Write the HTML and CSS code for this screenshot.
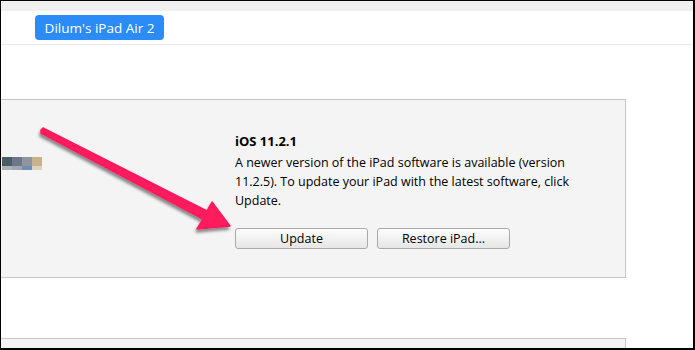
FILE: index.html
```html
<!DOCTYPE html>
<html lang="en">
<head>
    <meta charset="UTF-8">
    <title>iPad Summary</title>
    <link rel="stylesheet" href="styles.css">
</head>
<body>
    <div class="window">
        <div class="top-strip"></div>
        <div class="header">
            <span class="device-pill">Dilum's iPad Air 2</span>
        </div>

        <div class="panel">
            <div class="panel-left">
                <div class="thumb">
                    <span class="px" style="background:#4c5c65"></span>
                    <span class="px" style="background:#6e7789"></span>
                    <span class="px" style="background:#8c969b"></span>
                    <span class="px" style="background:#c8b18d"></span>
                    <span class="px low" style="background:#aeb1b2"></span>
                    <span class="px low" style="background:#a0a5b1"></span>
                    <span class="px low" style="background:#6d8fb6"></span>
                    <span class="px low" style="background:#ded2bd"></span>
                </div>
            </div>
            <div class="panel-right">
                <h3 class="version">iOS 11.2.1</h3>
                <p class="notice">A newer version of the iPad software is available (version 11.2.5). To update your iPad with the latest software, click Update.</p>
                <div class="actions">
                    <button class="btn">Update</button>
                    <button class="btn">Restore iPad...</button>
                </div>
            </div>
        </div>

        <div class="panel panel-next"></div>

        <svg class="arrow" width="695" height="350" viewBox="0 0 695 350">
            <defs>
                <filter id="shadow" x="-10%" y="-10%" width="130%" height="130%">
                    <feDropShadow dx="-1" dy="3" stdDeviation="1.6" flood-color="#000" flood-opacity="0.45"/>
                </filter>
            </defs>
            <polygon filter="url(#shadow)" fill="#fe1a5f" stroke="#fe1a5f" stroke-width="1.5" stroke-linejoin="round"
                points="41,130 43,128 207,211 212,202 230,226 197,229 203,219 41,133"/>
        </svg>
    </div>
</body>
</html>
```

FILE: styles.css
```css
body {
    margin: 0;
    font-family: "Open Sans", "Noto Sans", sans-serif;
    background-color: #ffffff;
}
.window {
    position: relative;
    width: 692px;
    height: 347px;
    border-style: solid;
    border-color: #000000;
    border-width: 1px 2px 2px 1px;
    overflow: hidden;
    background-color: #ffffff;
}
.top-strip {
    height: 10px;
    background-color: #f0f0f0;
}
.header {
    height: 33px;
    display: flex;
    align-items: center;
    padding-left: 34px;
    border-bottom: 1px solid #e9e9e9;
}
.device-pill {
    display: inline-flex;
    align-items: center;
    justify-content: center;
    width: 129px;
    height: 25px;
    border-radius: 4px;
    background-color: #2b8bf7;
    color: #ffffff;
    font-size: 13.5px;
}
.panel {
    display: flex;
    width: 624px;
    height: 177px;
    margin-top: 54px;
    background-color: #f4f4f4;
    border: 1px solid #c6c6c6;
    border-left: none;
}
.panel-next {
    margin-top: 60px;
    height: 40px;
}
.panel-left {
    width: 234px;
    padding-top: 57px;
}
.thumb {
    display: grid;
    grid-template-columns: repeat(4, 10px);
    grid-template-rows: 9px 4px;
    margin-left: 1px;
}
.px {
    display: block;
}
.panel-right {
    padding-top: 32px;
    color: #000000;
}
.version {
    margin: 0;
    font-size: 13px;
    font-weight: bold;
    line-height: 19px;
}
.notice {
    width: 370px;
    margin: 2px 0 0 0;
    font-size: 12.5px;
    line-height: 19px;
}
.actions {
    display: flex;
    gap: 9px;
    margin-top: 18px;
}
.btn {
    width: 133px;
    height: 21px;
    padding: 0;
    border: 1px solid #a9a9a9;
    border-radius: 3px;
    background: linear-gradient(#fdfdfd, #e6e6e6);
    font-family: "Open Sans", "Noto Sans", sans-serif;
    font-size: 12.5px;
    color: #000000;
}
.arrow {
    position: absolute;
    left: -1px;
    top: -1px;
    pointer-events: none;
}
```
